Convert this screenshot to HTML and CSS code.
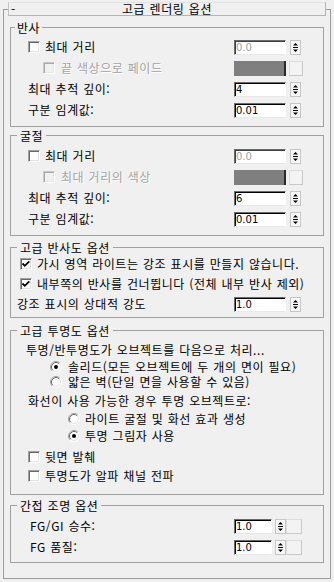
FILE: index.html
```html
<!DOCTYPE html>
<html lang="ko">
<head>
    <meta charset="UTF-8">
    <title>고급 렌더링 옵션</title>
    <link rel="stylesheet" href="styles.css">
</head>
<body>
    <div class="rollout">
        <div class="rollout-title">
            <span class="collapse">-</span>
            <span class="caption">고급 렌더링 옵션</span>
        </div>

        <fieldset class="group g-reflect">
            <legend>반사</legend>
            <div class="row mt4 ind17">
                <span class="check"></span><span class="txt">최대 거리</span>
                <div class="ctl">
                    <span class="field off">0.0</span>
                    <svg class="spin" width="11" height="15" viewBox="0 0 11 15"><rect x="0.5" y="0.5" width="10" height="14" fill="#f8f8f8" stroke="#c6c6c6"/><path d="M3 5.5 L5.5 3 L8 5.5 Z"/><path d="M3 7.5 H8" stroke="#000"/><path d="M3 9.5 H8 L5.5 12 Z"/></svg>
                </div>
            </div>
            <div class="row ind32">
                <span class="check dim"></span><span class="txt off">끝 색상으로 페이드</span>
                <div class="ctl">
                    <span class="swatch"></span><span class="pick"></span>
                </div>
            </div>
            <div class="row ind17">
                <span class="txt">최대 추적 깊이:</span>
                <div class="ctl">
                    <span class="field">4</span>
                    <svg class="spin" width="11" height="15" viewBox="0 0 11 15"><rect x="0.5" y="0.5" width="10" height="14" fill="#f8f8f8" stroke="#c6c6c6"/><path d="M3 5.5 L5.5 3 L8 5.5 Z"/><path d="M3 7.5 H8" stroke="#000"/><path d="M3 9.5 H8 L5.5 12 Z"/></svg>
                </div>
            </div>
            <div class="row ind17">
                <span class="txt">구분 임계값:</span>
                <div class="ctl">
                    <span class="field">0.01</span>
                    <svg class="spin" width="11" height="15" viewBox="0 0 11 15"><rect x="0.5" y="0.5" width="10" height="14" fill="#f8f8f8" stroke="#c6c6c6"/><path d="M3 5.5 L5.5 3 L8 5.5 Z"/><path d="M3 7.5 H8" stroke="#000"/><path d="M3 9.5 H8 L5.5 12 Z"/></svg>
                </div>
            </div>
        </fieldset>

        <fieldset class="group g-refract">
            <legend>굴절</legend>
            <div class="row ind17">
                <span class="check"></span><span class="txt">최대 거리</span>
                <div class="ctl">
                    <span class="field off">0.0</span>
                    <svg class="spin" width="11" height="15" viewBox="0 0 11 15"><rect x="0.5" y="0.5" width="10" height="14" fill="#f8f8f8" stroke="#c6c6c6"/><path d="M3 5.5 L5.5 3 L8 5.5 Z"/><path d="M3 7.5 H8" stroke="#000"/><path d="M3 9.5 H8 L5.5 12 Z"/></svg>
                </div>
            </div>
            <div class="row ind32">
                <span class="check dim"></span><span class="txt off">최대 거리의 색상</span>
                <div class="ctl">
                    <span class="swatch"></span><span class="pick"></span>
                </div>
            </div>
            <div class="row ind17">
                <span class="txt">최대 추적 깊이:</span>
                <div class="ctl">
                    <span class="field">6</span>
                    <svg class="spin" width="11" height="15" viewBox="0 0 11 15"><rect x="0.5" y="0.5" width="10" height="14" fill="#f8f8f8" stroke="#c6c6c6"/><path d="M3 5.5 L5.5 3 L8 5.5 Z"/><path d="M3 7.5 H8" stroke="#000"/><path d="M3 9.5 H8 L5.5 12 Z"/></svg>
                </div>
            </div>
            <div class="row ind17">
                <span class="txt">구분 임계값:</span>
                <div class="ctl">
                    <span class="field">0.01</span>
                    <svg class="spin" width="11" height="15" viewBox="0 0 11 15"><rect x="0.5" y="0.5" width="10" height="14" fill="#f8f8f8" stroke="#c6c6c6"/><path d="M3 5.5 L5.5 3 L8 5.5 Z"/><path d="M3 7.5 H8" stroke="#000"/><path d="M3 9.5 H8 L5.5 12 Z"/></svg>
                </div>
            </div>
        </fieldset>

        <fieldset class="group g-hilite">
            <legend>고급 반사도 옵션</legend>
            <div class="row mt1 ind9">
                <span class="check"><svg width="10" height="10" viewBox="0 0 10 10"><path d="M1.5 4.5 L3.8 6.8 L8.3 2.3" fill="none" stroke="#000" stroke-width="1.8"/></svg></span><span class="txt">가시 영역 라이트는 강조 표시를 만들지 않습니다.</span>
            </div>
            <div class="row mt4 ind9">
                <span class="check"><svg width="10" height="10" viewBox="0 0 10 10"><path d="M1.5 4.5 L3.8 6.8 L8.3 2.3" fill="none" stroke="#000" stroke-width="1.8"/></svg></span><span class="txt">내부쪽의 반사를 건너뜁니다 (전체 내부 반사 제외)</span>
            </div>
            <div class="row mt4 ind6">
                <span class="txt">강조 표시의 상대적 강도</span>
                <div class="ctl">
                    <span class="field">1.0</span>
                    <svg class="spin" width="11" height="15" viewBox="0 0 11 15"><rect x="0.5" y="0.5" width="10" height="14" fill="#f8f8f8" stroke="#c6c6c6"/><path d="M3 5.5 L5.5 3 L8 5.5 Z"/><path d="M3 7.5 H8" stroke="#000"/><path d="M3 9.5 H8 L5.5 12 Z"/></svg>
                </div>
            </div>
        </fieldset>

        <fieldset class="group g-trans">
            <legend>고급 투명도 옵션</legend>
            <div class="row short mt4 ind15">
                <span class="txt">투명/반투명도가 오브젝트를 다음으로 처리...</span>
            </div>
            <div class="row short mt2 ind39">
                <svg class="radio" width="12" height="12" viewBox="0 0 12 12"><circle cx="6" cy="6" r="5" fill="#fff"/><path d="M2.11 9.89 A5.5 5.5 0 0 1 9.89 2.11" fill="none" stroke="#a0a0a0"/><path d="M9.89 2.11 A5.5 5.5 0 0 1 2.11 9.89" fill="none" stroke="#fff"/><path d="M2.82 9.18 A4.5 4.5 0 0 1 9.18 2.82" fill="none" stroke="#696969"/><path d="M9.18 2.82 A4.5 4.5 0 0 1 2.82 9.18" fill="none" stroke="#e3e3e3"/><circle cx="6" cy="6" r="2" fill="#000"/></svg>
                <span class="txt">솔리드(모든 오브젝트에 두 개의 면이 필요)</span>
            </div>
            <div class="row short mt0 ind39">
                <svg class="radio" width="12" height="12" viewBox="0 0 12 12"><circle cx="6" cy="6" r="5" fill="#fff"/><path d="M2.11 9.89 A5.5 5.5 0 0 1 9.89 2.11" fill="none" stroke="#a0a0a0"/><path d="M9.89 2.11 A5.5 5.5 0 0 1 2.11 9.89" fill="none" stroke="#fff"/><path d="M2.82 9.18 A4.5 4.5 0 0 1 9.18 2.82" fill="none" stroke="#696969"/><path d="M9.18 2.82 A4.5 4.5 0 0 1 2.82 9.18" fill="none" stroke="#e3e3e3"/></svg>
                <span class="txt">얇은 벽(단일 면을 사용할 수 있음)</span>
            </div>
            <div class="row short mt4 ind17">
                <span class="txt">화선이 사용 가능한 경우 투명 오브젝트로:</span>
            </div>
            <div class="row short mt3 ind57">
                <svg class="radio" width="12" height="12" viewBox="0 0 12 12"><circle cx="6" cy="6" r="5" fill="#fff"/><path d="M2.11 9.89 A5.5 5.5 0 0 1 9.89 2.11" fill="none" stroke="#a0a0a0"/><path d="M9.89 2.11 A5.5 5.5 0 0 1 2.11 9.89" fill="none" stroke="#fff"/><path d="M2.82 9.18 A4.5 4.5 0 0 1 9.18 2.82" fill="none" stroke="#696969"/><path d="M9.18 2.82 A4.5 4.5 0 0 1 2.82 9.18" fill="none" stroke="#e3e3e3"/></svg>
                <span class="txt">라이트 굴절 및 화선 효과 생성</span>
            </div>
            <div class="row short mt2 ind57">
                <svg class="radio" width="12" height="12" viewBox="0 0 12 12"><circle cx="6" cy="6" r="5" fill="#fff"/><path d="M2.11 9.89 A5.5 5.5 0 0 1 9.89 2.11" fill="none" stroke="#a0a0a0"/><path d="M9.89 2.11 A5.5 5.5 0 0 1 2.11 9.89" fill="none" stroke="#fff"/><path d="M2.82 9.18 A4.5 4.5 0 0 1 9.18 2.82" fill="none" stroke="#696969"/><path d="M9.18 2.82 A4.5 4.5 0 0 1 2.82 9.18" fill="none" stroke="#e3e3e3"/><circle cx="6" cy="6" r="2" fill="#000"/></svg>
                <span class="txt">투명 그림자 사용</span>
            </div>
            <div class="row short mt6 ind17">
                <span class="check"></span><span class="txt">뒷면 발췌</span>
            </div>
            <div class="row short mt4 ind17">
                <span class="check"></span><span class="txt">투명도가 알파 채널 전파</span>
            </div>
        </fieldset>

        <fieldset class="group g-indirect">
            <legend>간접 조명 옵션</legend>
            <div class="row ind19">
                <span class="txt">FG/GI 승수:</span>
                <div class="ctl fg">
                    <span class="field">1.0</span>
                    <svg class="spin" width="11" height="15" viewBox="0 0 11 15"><rect x="0.5" y="0.5" width="10" height="14" fill="#f8f8f8" stroke="#c6c6c6"/><path d="M3 5.5 L5.5 3 L8 5.5 Z"/><path d="M3 7.5 H8" stroke="#000"/><path d="M3 9.5 H8 L5.5 12 Z"/></svg>
                    <span class="pick"></span>
                </div>
            </div>
            <div class="row ind19">
                <span class="txt">FG 품질:</span>
                <div class="ctl fg">
                    <span class="field">1.0</span>
                    <svg class="spin" width="11" height="15" viewBox="0 0 11 15"><rect x="0.5" y="0.5" width="10" height="14" fill="#f8f8f8" stroke="#c6c6c6"/><path d="M3 5.5 L5.5 3 L8 5.5 Z"/><path d="M3 7.5 H8" stroke="#000"/><path d="M3 9.5 H8 L5.5 12 Z"/></svg>
                    <span class="pick"></span>
                </div>
            </div>
        </fieldset>
    </div>
</body>
</html>
```

FILE: styles.css
```css
html, body {
    margin: 0;
    padding: 0;
    background-color: #f0f0f0;
    color: #000000;
    font-family: "Noto Sans CJK KR", "Noto Sans", sans-serif;
    font-size: 12px;
    letter-spacing: 0.55px;
    word-spacing: 0.5px;
}

.rollout {
    margin: 9px 3px 0 3px;
    border: 1px solid #9c9c9c;
    padding-bottom: 15px;
}

.rollout-title {
    display: flex;
    align-items: center;
    height: 12px;
    margin: -8px 4px 0 4px;
    padding: 0 10px 0 2px;
    border: 1px solid #b4b4b4;
    border-top-color: #e2e2e2;
    border-left-color: #c4c4c4;
    background-color: #f0f0f0;
    line-height: 12px;
}

.collapse {
    width: 8px;
}

.caption {
    flex: 1;
    text-align: center;
}

/* group boxes */
.group {
    min-width: 0;
    margin: 0 6px;
    padding: 0 19px 0 0;
    border: 1px solid #a0a0a0;
}

.group legend {
    height: 15px;
    margin-left: 4px;
    padding: 0 2px;
    line-height: 15px;
}

.g-reflect { margin-top: 4px; padding-bottom: 8px; }
.g-refract { margin-top: 1px; padding-bottom: 8px; }
.g-hilite { margin-top: 4px; padding-bottom: 5px; }
.g-trans { margin-top: 5px; padding-bottom: 11px; }
.g-indirect { margin-top: 3px; padding-bottom: 7px; }

.g-refract legend,
.g-hilite legend,
.g-trans legend,
.g-indirect legend {
    margin-left: 6px;
    padding: 0 3px;
}

/* rows */
.row {
    display: flex;
    align-items: center;
    height: 16px;
    margin-top: 5px;
    line-height: 16px;
    white-space: nowrap;
}

.row.short { height: 15px; line-height: 15px; }

.mt0 { margin-top: 0; }
.mt1 { margin-top: 1px; }
.mt2 { margin-top: 2px; }
.mt3 { margin-top: 3px; }
.mt4 { margin-top: 4px; }
.mt6 { margin-top: 6px; }

.ind6 { padding-left: 6px; }
.ind9 { padding-left: 9px; }
.ind15 { padding-left: 15px; }
.ind17 { padding-left: 17px; }
.ind19 { padding-left: 19px; }
.ind32 { padding-left: 32px; }
.ind39 { padding-left: 39px; }
.ind57 { padding-left: 57px; }

.txt.off {
    color: #a3a3a3;
    text-shadow: 1px 1px 0 #ffffff;
}

/* check boxes and radios */
.check {
    box-sizing: border-box;
    flex: none;
    width: 12px;
    height: 12px;
    margin-right: 5px;
    background-color: #ffffff;
    border: 1px solid;
    border-color: #a0a0a0 #ffffff #ffffff #a0a0a0;
    box-shadow: inset 1px 1px 0 #696969, inset -1px -1px 0 #e3e3e3;
}

.check svg {
    display: block;
}

.check.dim {
    margin-right: 6px;
    background-color: #f0f0f0;
    border-color: #c8c8c8 #ffffff #ffffff #c8c8c8;
    box-shadow: inset 1px 1px 0 #a8a8a8, inset -1px -1px 0 #e8e8e8;
}

.radio {
    flex: none;
    margin-right: 5px;
}

.ind39 .radio { margin-right: 6px; }

/* spinner controls */
.ctl {
    display: flex;
    align-items: center;
    width: 70px;
    margin-left: auto;
}

.field {
    box-sizing: border-box;
    width: 52px;
    height: 15px;
    margin-right: 4px;
    padding-left: 1px;
    background-color: #ffffff;
    border: 1px solid;
    border-color: #6b6b6b #ffffff #e8e8e8 #6b6b6b;
    box-shadow: inset 1px 1px 0 #000000;
    font-family: "DejaVu Sans", "Liberation Sans", sans-serif;
    font-size: 10px;
    line-height: 13px;
    letter-spacing: 0;
}

.field.off {
    color: #a0a0a0;
    box-shadow: inset 1px 1px 0 #404040;
}

.spin {
    display: block;
    flex: none;
}

.swatch {
    box-sizing: border-box;
    width: 52px;
    height: 15px;
    margin-right: 3px;
    background-color: #7f7f7f;
    border-right: 2px solid #2a2a2a;
}

.pick {
    box-sizing: border-box;
    flex: none;
    width: 14px;
    height: 15px;
    background-color: #f3f3f3;
    border: 1px solid #c8c8c8;
    border-top-color: #dcdcdc;
    border-left-color: #dcdcdc;
}

.ctl.fg {
    padding-left: 1px;
}

.ctl.fg .field {
    width: 38px;
    margin-right: 3px;
}

.ctl.fg .pick {
    width: 16px;
}
```
